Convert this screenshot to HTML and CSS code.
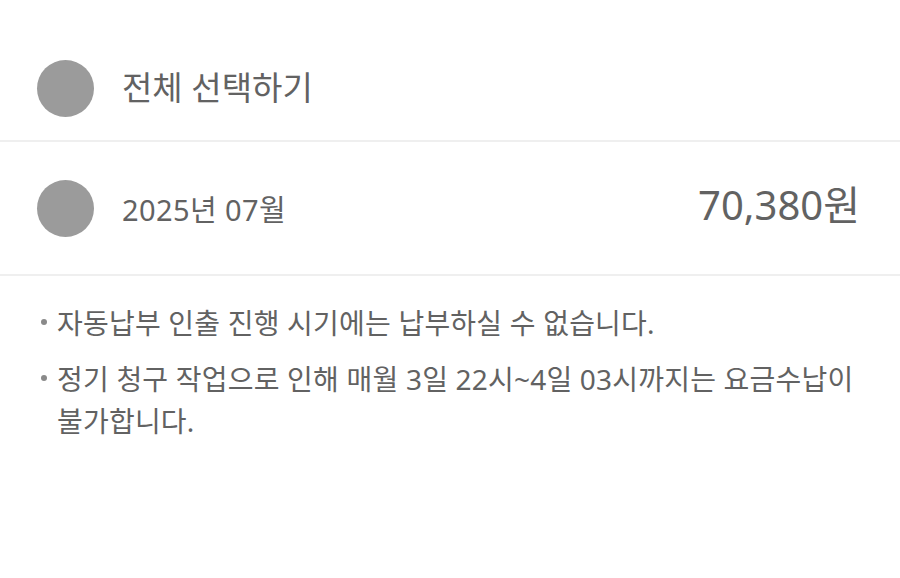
FILE: index.html
```html
<!DOCTYPE html>
<html lang="ko">
<head>
<meta charset="utf-8">
<link rel="stylesheet" href="styles.css">
</head>
<body>
<div class="page">
  <div class="row row-all">
    <span class="check"></span>
    <span class="label-all">전체 선택하기</span>
  </div>
  <div class="row row-item">
    <span class="check"></span>
    <span class="label-month">2025년 07월</span>
    <span class="amount">70,380원</span>
  </div>
  <ul class="notes">
    <li>자동납부 인출 진행 시기에는 납부하실 수 없습니다.</li>
    <li>정기 청구 작업으로 인해 매월 3일 22시~4일 03시까지는 요금수납이 불가합니다.</li>
  </ul>
</div>
</body>
</html>
```
FILE: styles.css
```css
html, body {
  margin: 0;
  padding: 0;
  background: #fff;
}
body {
  font-family: "Noto Sans", "Noto Sans CJK KR", sans-serif;
  color: #626262;
}
.page {
  width: 900px;
}
.row {
  display: flex;
  align-items: center;
  padding-left: 37px;
  padding-right: 40px;
  border-bottom: 2px solid #efefef;
}
.row-all {
  padding-top: 60px;
  padding-bottom: 23px;
}
.row-item {
  padding-top: 38px;
  padding-bottom: 37px;
}
.check {
  width: 57px;
  height: 57px;
  border-radius: 50%;
  background: #9b9b9b;
  flex: none;
}
.label-all {
  margin-left: 28px;
  font-size: 33px;
  line-height: 40px;
  margin-top: -2px;
}
.label-month {
  margin-left: 28px;
  font-size: 29px;
  letter-spacing: 0.4px;
  line-height: 36px;
  margin-top: 2px;
}
.amount {
  margin-left: auto;
  font-size: 40px;
  line-height: 48px;
  margin-top: -8px;
}
.notes {
  list-style: none;
  margin: 0;
  padding: 26px 28px 0 57px;
}
.notes li {
  position: relative;
  font-size: 28px;
  letter-spacing: 0.2px;
  line-height: 42px;
  margin-bottom: 14px;
}
.notes li::before {
  content: "";
  position: absolute;
  left: -16px;
  top: 17px;
  width: 6px;
  height: 6px;
  border-radius: 50%;
  background: #8a8a8a;
}
```
